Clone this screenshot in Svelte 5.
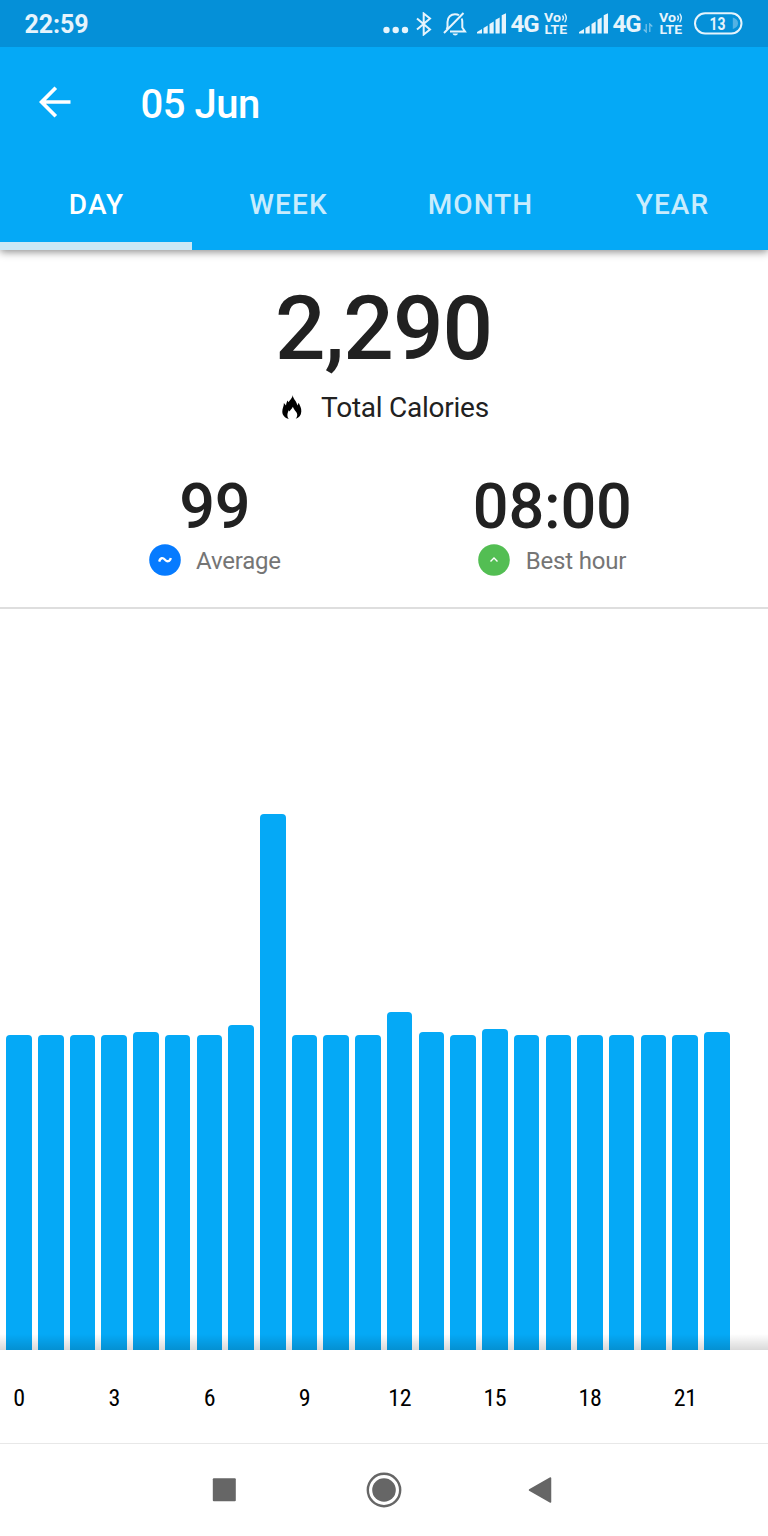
<script lang="ts">
  /**
   * Calories history, day view: summary figures on top, one bar per hour below.
   */

  const tabs = ['DAY', 'WEEK', 'MONTH', 'YEAR'];
  let active = $state('DAY');

  // kcal burned per hour, 0:00 to 22:00
  const hours = [
    96, 96, 96, 96, 97, 96, 96, 99, 163, 96, 96, 96,
    103, 97, 96, 98, 96, 96, 96, 96, 96, 96, 97,
  ];
  const PX_PER_KCAL = 3.3;
  const BASE_OFFSET = -2.5;
  const LABEL_STEP = 3;

  const total = hours.reduce((sum, v) => sum + v, 0);
  const best = hours.indexOf(Math.max(...hours));
  const average = Math.floor(total / hours.length);
  const bestHour = `${String(best).padStart(2, '0')}:00`;
</script>

{#snippet signal()}
  <svg class="signal" width="29" height="21" viewBox="0 0 29 21" fill="currentColor">
    <path d="M0 20.500V19L5 16V20.500ZM6.500 15L10.700 12.500V20.500H6.500ZM12.500 11L16.700 8.500V20.500H12.500ZM18.500 6.800L22.700 4.500V20.500H18.500ZM24.700 2.300L29 .300V20.500H24.700Z" />
  </svg>
{/snippet}

{#snippet volte()}
  <svg class="volte" width="25" height="28" viewBox="0 -3 25 28" fill="currentColor">
    <text x="0" y="9.800" font-size="12" textLength="17" lengthAdjust="spacingAndGlyphs">Vo</text>
    <path d="M18.500 3.500q2 2.500 0 5M20.700 1.700q3.200 4.300 0 8.600" fill="none" stroke="currentColor" stroke-width="1.300" />
    <text x="0.500" y="22.300" font-size="13" textLength="22.500" lengthAdjust="spacingAndGlyphs">LTE</text>
  </svg>
{/snippet}

<div class="screen">
  <div class="status">
    <span class="status__time">22:59</span>
    <div class="status__icons">
      <svg class="dots" width="26" height="8" viewBox="0 0 26 8" fill="currentColor">
        <circle cx="3.500" cy="4" r="3.200" /><circle cx="12.700" cy="4" r="3.200" /><circle cx="22" cy="4" r="3.200" />
      </svg>
      <svg class="bluetooth" width="16" height="24" viewBox="0 0 16 24" fill="none" stroke="currentColor" stroke-width="2">
        <path d="M1 6.500L14 17.500L7.700 22.500V1.500L14 6.500L1 17.500" />
      </svg>
      <svg class="bell" width="24" height="24" viewBox="0 0 24 24" fill="none" stroke="currentColor" stroke-width="2">
        <path d="M4.500 15V10C4.500 5 8 2.200 12 2.200Q14.500 2.200 16 3.300M18.700 6.500Q19.300 8 19.300 10V15.500L22 19.500H7M3.700 17L4.500 15M1 21L20.500 1" />
        <path d="M9.500 21.500H15Q14.500 23.500 12.200 23.500Q10 23.500 9.500 21.500Z" fill="currentColor" stroke="none" />
      </svg>
      {@render signal()}
      <span class="net">4G</span>
      {@render volte()}
      <span class="sim2">{@render signal()}</span>
      <span class="net">4G</span>
      <svg class="traffic" width="10" height="10" viewBox="0 0 10 10" fill="none" stroke="currentColor" stroke-width="1.300">
        <path d="M3.200 1V9L.700 6.500M6.800 9V1L9.300 3.500" />
      </svg>
      {@render volte()}
      <svg class="battery" width="49" height="23" viewBox="0 0 49 23">
        <rect x="1" y="1.200" width="46.500" height="20.300" rx="10.150" fill="none" stroke="currentColor" stroke-width="2" />
        <path d="M38.800 5.500Q44 7 44 11.300T38.800 17Z" fill="currentColor" opacity=".35" />
        <text x="15.500" y="17.600" font-size="18" textLength="16" lengthAdjust="spacingAndGlyphs" fill="currentColor">13</text>
      </svg>
    </div>
  </div>

  <header class="bar">
    <div class="bar__top">
      <button class="back" type="button" aria-label="Back">
        <svg width="32" height="32" viewBox="0 0 32 32" fill="none" stroke="currentColor" stroke-width="3.700">
          <path d="M31.500 16H3M16.800 1.800L2.600 16L16.800 30.200" />
        </svg>
      </button>
      <h1>05 Jun</h1>
    </div>
    <nav class="tabs">
      {#each tabs as tab}
        <button type="button" class="tab" class:active={tab === active} onclick={() => (active = tab)}>{tab}</button>
      {/each}
    </nav>
  </header>

  <section class="summary">
    <div class="total">{total.toLocaleString('en-US')}</div>
    <div class="total-label">
      <svg width="20" height="24" viewBox="0 0 20 24">
        <path d="M10.700 0C10.800 3.500 14.500 6 15.500 10.500L16.700 7.800C18 11 19.500 13 19.300 16.500C19.100 20.500 17 22.800 13.700 23.800C15.200 22 15.700 20 14.800 18C14 16.300 12 15 10.800 11.800C10 14 8.300 14.500 7.700 16.500L6.800 15.200C5.300 18 4.700 21.500 6.800 23.900C3 22.900.300 20.500.300 16.500C.300 13 2 11.500 1.900 8L4 10.500C4.200 8 5 7.500 5.300 5.500L6.700 7.200C8 4.500 10.300 3.500 10.700 0Z" fill="#000" />
      </svg>
      <span>Total Calories</span>
    </div>

    <div class="stats">
      <div class="stat">
        <div class="stat__value">{average}</div>
        <div class="stat__label">
          <svg width="32" height="32" viewBox="0 0 32 32" fill="none">
            <circle cx="16" cy="16" r="15.800" fill="#067bff" />
            <path d="M10.200 17.600C11.300 13.300 14 13.600 16 15.700S20.700 18.200 21.800 14" stroke="#fff" stroke-width="2.300" />
          </svg>
          <span>Average</span>
        </div>
      </div>
      <div class="stat">
        <div class="stat__value">{bestHour}</div>
        <div class="stat__label">
          <svg width="32" height="32" viewBox="0 0 32 32" fill="none">
            <circle cx="16" cy="16" r="15.800" fill="#53be53" />
            <path d="M12.500 17.600L16 14.100L19.500 17.600" stroke="#fff" stroke-width="1.400" />
          </svg>
          <span>Best hour</span>
        </div>
      </div>
    </div>
  </section>

  <section class="chart">
    {#each hours as kcal}
      <div class="chart__bar" style:height="{kcal * PX_PER_KCAL + BASE_OFFSET}px"></div>
    {/each}
  </section>

  <div class="axis">
    {#each hours as _, h}
      <div class="axis__tick">
        {#if h % LABEL_STEP === 0}<span>{h}</span>{/if}
      </div>
    {/each}
  </div>

  <footer class="navbar">
    <svg width="24" height="24" viewBox="0 0 24 24"><rect x=".800" y=".300" width="23" height="23" rx="1" /></svg>
    <svg width="36" height="36" viewBox="0 0 36 36">
      <circle cx="18" cy="18" r="16.200" fill="none" stroke="#666" stroke-width="2.400" />
      <circle cx="18" cy="18" r="11.800" />
    </svg>
    <svg width="24" height="28" viewBox="0 0 24 28"><path d="M1.500 14L22.500 2V26Z" stroke="#666" stroke-width="1.500" stroke-linejoin="round" /></svg>
  </footer>
</div>

<style>
  :global(body) {
    margin: 0;
    background: #fff;
  }

  .screen {
    display: flex;
    flex-direction: column;
    width: 768px;
    height: 1536px;
    overflow: hidden;
    background: #fff;
    color: #212121;
    font-family: Roboto, sans-serif;
  }

  svg {
    display: block;
    flex-shrink: 0;
  }

  button {
    padding: 0;
    border: 0;
    background: none;
    color: inherit;
    font: inherit;
    cursor: pointer;
  }

  /* above the header, whose shadow must only fall downwards */
  .status {
    position: relative;
    z-index: 1;
    display: flex;
    justify-content: space-between;
    align-items: center;
    box-sizing: border-box;
    height: 47px;
    padding: 0 25px 0 24.500px;
    background: #0590d8;
    color: #e6f4fc;
    font-weight: 700;
  }

  .status__time {
    font-size: 25px;
    letter-spacing: -0.1px;
    padding-top: 1px;
  }

  .status__icons {
    display: flex;
    align-items: center;
  }

  .dots {
    margin: 13px 7px 0 0;
  }

  .bluetooth {
    margin-right: 10.500px;
  }

  .bell {
    margin-right: 10px;
  }

  .net {
    width: 28px;
    margin: 1px 6px 0 5px;
    font-size: 24px;
    letter-spacing: -1px;
  }

  .sim2 {
    margin-left: 9.500px;
  }

  .traffic {
    margin: 9px 7px 0 -4px;
    opacity: 0.5;
  }

  .battery {
    margin-left: 10px;
  }

  .volte {
    margin: -1px 0 0 -0.500px;
  }

  .bar {
    position: relative;
    height: 203px;
    background: #05a9f6;
    color: #fff;
    box-shadow: 0 2px 8px rgba(0, 0, 0, 0.45);
  }

  .bar__top {
    display: flex;
    align-items: center;
    height: 111px;
    padding-left: 39px;
  }

  .back {
    margin: 0 69.500px 2px 0;
  }

  h1 {
    margin: 3px 0 0;
    font-size: 40px;
    font-weight: 500;
    letter-spacing: -0.5px;
  }

  .tabs {
    display: flex;
    height: 92px;
  }

  .tab {
    flex: 1;
    box-sizing: border-box;
    padding: 9px 0 0 1px;
    border-bottom: 8px solid transparent;
    color: #c9ecfd;
    font-size: 28px;
    font-weight: 500;
    letter-spacing: 1.1px;
  }

  .tab.active {
    border-color: #cbe8f5;
    color: #fff;
  }

  .summary {
    box-sizing: border-box;
    height: 359px;
    padding-top: 27px;
    border-bottom: 2px solid #dedede;
  }

  .total {
    height: 104px;
    line-height: 104px;
    font-size: 89px;
    font-weight: 500;
    letter-spacing: -1px;
    text-align: center;
    text-indent: -1px;
  }

  .total-label {
    display: flex;
    justify-content: center;
    align-items: center;
    gap: 19px;
    height: 52px;
    padding: 0 0 2px 3px;
    font-size: 28px;
    letter-spacing: -0.25px;
  }

  .total-label svg {
    margin-top: -1px;
  }

  .stats {
    display: flex;
    padding: 34.500px 47px 0 46px;
  }

  .stat {
    flex: 1;
    display: flex;
    flex-direction: column;
    align-items: center;
  }

  .stat__value {
    height: 72.500px;
    line-height: 73px;
    font-size: 63px;
    font-weight: 500;
    letter-spacing: -0.2px;
  }

  .stat__label {
    display: flex;
    align-items: center;
    gap: 15.500px;
    height: 36px;
    color: #757575;
    font-size: 24px;
    letter-spacing: -0.2px;
  }

  .stat__label span {
    padding-top: 2px;
  }

  .chart {
    position: relative;
    display: flex;
    align-items: flex-end;
    gap: 6.230px;
    height: 740.500px;
    padding-left: 6.300px;
  }

  /* shade above the axis strip, laid over the foot of the bars */
  .chart::after {
    content: '';
    position: absolute;
    inset: auto 0 0;
    height: 16px;
    background: linear-gradient(transparent, rgba(0, 0, 0, 0.15));
  }

  .chart__bar {
    width: 25.500px;
    border-radius: 4px 4px 0 0;
    background: #05a9f6;
  }

  .axis {
    display: flex;
    align-items: center;
    gap: 6.230px;
    box-sizing: border-box;
    height: 94.500px;
    padding: 3px 0 0 6.300px;
    border-bottom: 1px solid #e8e8e8;
    color: #000;
    font-family: 'Roboto Condensed', Roboto, sans-serif;
    font-size: 24px;
    font-stretch: condensed;
    letter-spacing: -0.4px;
  }

  .axis__tick {
    display: flex;
    justify-content: center;
    width: 25.500px;
  }

  .navbar {
    display: flex;
    align-items: center;
    flex: 1;
    gap: 130px;
    padding-left: 212px;
    fill: #666;
  }

  .navbar svg:last-child {
    margin-left: -4px;
  }
</style>
